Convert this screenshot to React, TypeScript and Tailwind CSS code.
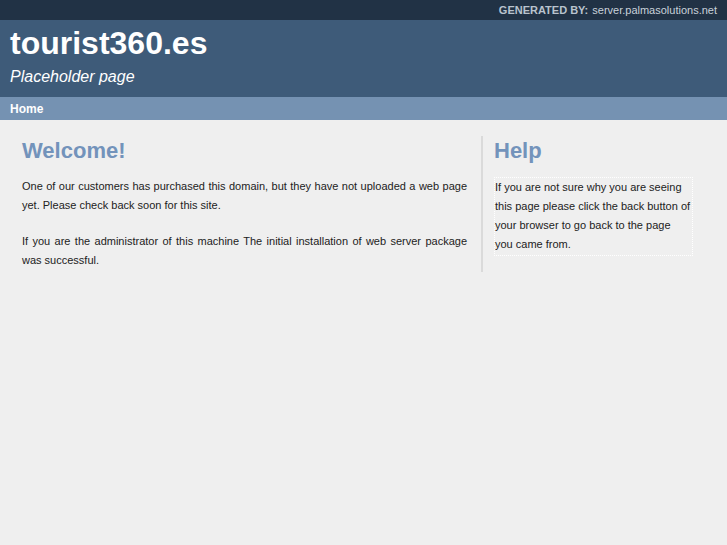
export default function App() {
  return (
    <div className="min-h-[545px] bg-[#efefef] font-['Liberation_Sans',Arial,sans-serif]">
      {/* top strip */}
      <div className="flex h-5 items-center justify-end bg-[#213245] pr-[10px] text-[11px]">
        <span className="font-bold text-[#b9c3ce]">GENERATED BY:</span>
        <span className="ml-1 text-[#c9d1da]">server.palmasolutions.net</span>
      </div>

      {/* header */}
      <div className="h-[77px] bg-[#3e5b79] px-[10px] pt-[4px]">
        <h1 className="text-[32px] font-bold leading-[38px] text-white">tourist360.es</h1>
        <p className="mt-[5px] text-[16px] italic leading-[20px] text-white">Placeholder page</p>
      </div>

      {/* nav */}
      <div className="flex h-[23px] items-center bg-[#7592b2] px-[10px]">
        <span className="text-[12px] font-bold text-white">Home</span>
      </div>

      {/* content */}
      <div className="flex pt-4">
        <div className="w-[467px] pl-[22px]">
          <h2 className="text-[22px] font-bold leading-[30px] text-[#7393bb]">Welcome!</h2>
          <p className="mt-[11px] text-justify text-[11px] leading-[19px] text-[#222]">
            One of our customers has purchased this domain, but they have not uploaded a web page yet. Please check back soon for this site.
          </p>
          <p className="mt-[17px] text-justify text-[11px] leading-[19px] text-[#222]">
            If you are the administrator of this machine The initial installation of web server package was successful.
          </p>
        </div>
        <div className="ml-[14px] h-[136px] w-[2px] bg-[#dadada]"></div>
        <div className="pl-[11px]">
          <h2 className="text-[22px] font-bold leading-[30px] text-[#7393bb]">Help</h2>
          <div className="mt-[11px] w-[199px] border border-dotted border-white pr-px pb-px text-[11px] leading-[19px] text-[#222]">
            If you are not sure why you are seeing this page please click the back button of your browser to go back to the page you came from.
          </div>
        </div>
      </div>
    </div>
  );
}
